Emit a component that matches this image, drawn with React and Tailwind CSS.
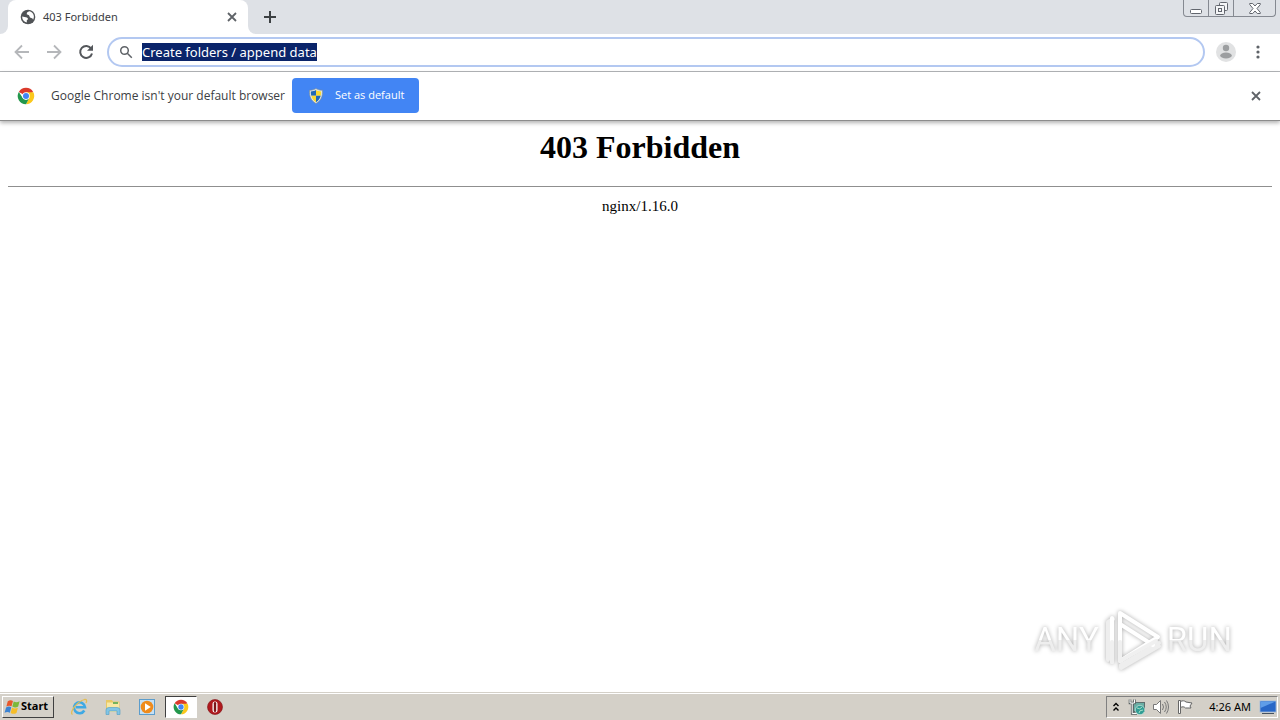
import { useEffect, useRef } from 'react';

const GlobeIcon = () => (
  <svg viewBox="0 0 16 16" className="w-4 h-4 shrink-0" aria-hidden="true">
    <circle cx="8" cy="8" r="7.3" fill="#505356" />
    <path d="M2.2 7.6 7 8.4l1.2 1.5-1.4 1.3v2.3C4 13 2.200 10.800 2.200 8z" fill="#fff" />
    <path d="M9.200 2.300 7 3.600 6.700 5.300 9 6.300l1 2.200 2.500 1 .6 1.300c1.200-2.200 1-4.600-.2-6.300C12 3.300 10.700 2.500 9.200 2.300z" fill="#fff" />
  </svg>
);

const CloseIcon = ({ className }) => (
  <svg viewBox="0 0 10 10" className={className} fill="none" stroke="#5f6368" strokeWidth="1.8" aria-hidden="true">
    <path d="M1 1l8 8M9 1L1 9" />
  </svg>
);

const ChromeLogo = ({ className }) => (
  <svg viewBox="0 0 48 48" className={className} aria-hidden="true">
    <path d="M24 24 4.9 13A22 22 0 0 1 43.1 13z" fill="#db3a2b" />
    <path d="M24 14h19.600A22 22 0 0 1 24 46l8.700-17z" fill="#fbc81c" />
    <path d="M4.900 13 15.300 29 24 34l8.700-5L24 46A22 22 0 0 1 4.900 13z" fill="#23974c" />
    <circle cx="24" cy="24" r="10" fill="#fff" />
    <circle cx="24" cy="24" r="8" fill="#4285f4" />
  </svg>
);

const ShieldIcon = () => (
  <svg viewBox="0 0 16 16" className="w-4 h-4" aria-hidden="true">
    <path d="M8 .5c2 1.400 4 1.700 6.500 1.700.3 6-1.200 10.300-6.500 13.300C2.700 12.500 1.200 8.200 1.500 2.200 4 2.200 6 1.900 8 .5z" fill="#dfe6ea" stroke="#7b8a8c" strokeWidth=".6" />
    <path d="M8 2C6.400 3 4.800 3.400 2.800 3.500c0 1.500.1 2.800.5 4.200H8z" fill="#1f68b8" />
    <path d="M8 2c1.600 1 3.200 1.400 5.200 1.500 0 1.500-.1 2.800-.5 4.200H8z" fill="#f9d932" />
    <path d="M3.300 7.700C4 10.600 5.600 12.700 8 14.200V7.700z" fill="#f9d932" />
    <path d="M12.700 7.700C12 10.600 10.400 12.700 8 14.200V7.700z" fill="#1f68b8" />
  </svg>
);

const TabStrip = () => (
  <header className="h-[34px] bg-[#dee1e6] flex items-start">
    <div className="w-2 h-[34px] bg-white shrink-0">
      <div className="h-full bg-[#dee1e6] rounded-br-lg"></div>
    </div>
    <div className="w-60 h-[34px] bg-white rounded-t-lg flex items-center pl-3 pr-[9px]">
      <GlobeIcon />
      <span className="ml-[7px] flex-1 text-[11px] text-[#3c4043]">403 Forbidden</span>
      <button aria-label="Close tab" className="p-0.5">
        <CloseIcon className="w-2.5 h-2.5" />
      </button>
    </div>
    <div className="w-2 h-[34px] bg-white shrink-0">
      <div className="h-full bg-[#dee1e6] rounded-bl-lg"></div>
    </div>
    <button aria-label="New tab" className="h-[34px] w-7 flex items-center justify-center">
      <svg viewBox="0 0 12 12" className="w-3 h-3" stroke="#3c4043" strokeWidth="2">
        <path d="M6 0v12M0 6h12" />
      </svg>
    </button>
    <div className="ml-auto mr-1 h-[17px] flex border border-t-0 border-[#858991] rounded-b divide-x divide-[#858991]">
      <button aria-label="Minimize" className="w-[25px] flex items-center justify-center">
        <svg viewBox="0 0 12 12" className="w-3 h-3" fill="#fff" stroke="#62666e">
          <rect x=".5" y="7.5" width="11" height="4" rx="1" />
        </svg>
      </button>
      <button aria-label="Restore" className="w-[25px] flex items-center justify-center">
        <svg viewBox="0 0 13 13" className="w-[13px] h-[13px]" fill="#f4f5f7" stroke="#62666e">
          <rect x="4.5" y=".5" width="8" height="8" rx="1" />
          <rect x=".5" y="3.5" width="9" height="9" rx="1" />
          <rect x="3.5" y="6.5" width="3" height="3" />
        </svg>
      </button>
      <button aria-label="Close" className="w-[41px] flex items-center justify-center">
        <svg viewBox="0 0 12 11" className="w-3 h-[11px]" fill="#fff" stroke="#62666e">
          <path d="M.7.5h3L6 3 8.300.5h3v1L8 5.500l3.300 4v1h-3L6 8l-2.300 2.500h-3v-1L4 5.500.7 1.500z" />
        </svg>
      </button>
    </div>
  </header>
);

const Toolbar = () => {
  const inputRef = useRef(null);

  useEffect(() => {
    inputRef.current.focus();
    inputRef.current.select();
  }, []);

  return (
    <div className="h-[38px] border-b border-[#b4b6b9] flex items-center pb-px pl-3.5 pr-3.5">
      <div className="flex items-center gap-4 shrink-0">
        <button aria-label="Back">
          <svg viewBox="0 0 16 16" className="w-4 h-4" fill="none" stroke="#b5b7ba" strokeWidth="1.8">
            <path d="M15 8H2M8 1.500 1.500 8 8 14.500" />
          </svg>
        </button>
        <button aria-label="Forward">
          <svg viewBox="0 0 16 16" className="w-4 h-4" fill="none" stroke="#b5b7ba" strokeWidth="1.8">
            <path d="M1 8h13M8 1.500 14.500 8 8 14.500" />
          </svg>
        </button>
        <button aria-label="Reload">
          <svg viewBox="0 0 16 16" className="w-4 h-4">
            <path d="M13.200 4.600A6 6 0 1 0 14 9.500" fill="none" stroke="#54575b" strokeWidth="2" />
            <path d="M15 .8v6H9z" fill="#54575b" />
          </svg>
        </button>
      </div>
      <div className="ml-[13px] flex-1 h-[30px] border-2 border-[#b3c8f1] rounded-full flex items-center pl-2.5">
        <svg viewBox="0 0 14 14" className="w-3.5 h-3.5 shrink-0" fill="none" stroke="#5f6368" strokeWidth="1.5">
          <circle cx="5.5" cy="5.5" r="3.8" />
          <path d="M8.300 8.300 12.800 12.800" />
        </svg>
        <input
          ref={inputRef}
          type="text"
          aria-label="Address and search bar"
          defaultValue="Create folders / append data"
          className="ml-[9px] flex-1 h-[18px] leading-[18px] text-[13px] bg-transparent outline-none caret-transparent selection:bg-[#0a246a] selection:text-white"
        />
      </div>
      <button aria-label="Profile" className="ml-[11px]">
        <svg viewBox="0 0 20 20" className="w-5 h-5">
          <circle cx="10" cy="10" r="10" fill="#e1e2e3" />
          <circle cx="10" cy="6" r="3.2" fill="#9c9ea0" />
          <ellipse cx="10" cy="13.5" rx="5.8" ry="3" fill="#9c9ea0" />
        </svg>
      </button>
      <button aria-label="Menu" className="ml-3.5">
        <svg viewBox="0 0 16 16" className="w-4 h-4" fill="#5f6368">
          <circle cx="8" cy="3" r="1.6" />
          <circle cx="8" cy="8" r="1.6" />
          <circle cx="8" cy="13" r="1.6" />
        </svg>
      </button>
    </div>
  );
};

const InfoBar = () => (
  <div className="h-[49px] border-b border-[#8c8c8c] shadow-[0_2px_4px_rgba(0,0,0,0.3)] flex items-center pb-px pl-[17px] pr-[19px]">
    <ChromeLogo className="w-[18px] h-[18px]" />
    <p className="ml-4 w-[229px] whitespace-nowrap text-[12px] text-[#3c4043] font-['Open_Sans','Noto_Sans',sans-serif]">
      Google Chrome isn't your default browser
    </p>
    <button className="ml-3 h-[35px] w-[127px] bg-[#4285f4] rounded text-white text-[11px] flex items-center pl-4 gap-[11px] whitespace-nowrap font-['Open_Sans','Noto_Sans',sans-serif]">
      <ShieldIcon />
      Set as default
    </button>
    <button aria-label="Dismiss" className="ml-auto">
      <CloseIcon className="w-2.5 h-2.5" />
    </button>
  </div>
);

const Watermark = () => (
  <div className="absolute right-12 bottom-5 h-16 flex items-center gap-1 text-[33px] leading-10 drop-shadow-[0_0_2px_#aaa] font-['Roboto',sans-serif]">
    <span className="text-transparent bg-clip-text bg-linear-to-b from-white from-50% to-[#eeeeee] to-50%">ANY</span>
    <svg viewBox="0 0 60 64" className="w-[60px] h-16" fill="none" strokeWidth="4" strokeLinejoin="round" strokeLinecap="round">
      <path d="M18 57 56 35M5 52V14l5-3M18 57v3l38-22" stroke="#eeeeee" />
      <path d="M17 48V5l38 24-38 24M17 16l33 21M9 10v44" stroke="#fff" />
      <path d="M17 34v19l36-20M9 34v20" stroke="#f0f0f0" />
    </svg>
    <span className="text-transparent bg-clip-text bg-linear-to-b from-white from-50% to-[#eeeeee] to-50%">RUN</span>
  </div>
);

const StartFlag = () => (
  <svg viewBox="0 0 18 16" className="w-[17px] h-4 shrink-0" aria-hidden="true">
    <path d="M4 2c2-1.500 4-1.300 5.500-.3L8 7.300C6.500 6.300 4.500 6.300 2.500 7.500z" fill="#e8582b" />
    <path d="M10.300 2.200c2 1.200 4 1 6.200-.2L15 7.600c-2 1.200-4 1.200-6.200 0z" fill="#7cb83a" />
    <path d="M2.200 8.500c2-1.200 4-1.200 5.500-.2L6.200 14C4.500 13 2.500 13 .6 14.200z" fill="#3c83d2" />
    <path d="M8.500 8.600c2 1.200 4 1.200 6.200.1L13.200 14.300c-2 1.200-4 1.200-6.200 0z" fill="#f6bd28" />
  </svg>
);

const ExplorerIcon = () => (
  <svg viewBox="0 0 18 18" className="w-[18px] h-[18px]">
    <path d="M14.300 12.500A5.500 5.500 0 1 1 15 9.200H6" fill="none" stroke="#3fa9e4" strokeWidth="2.6" />
    <path d="M2.500 16.500c-3.500-1.500 3.500-12.500 12-15 2.500-.4 2.500 1.500 1.500 3.500" fill="none" stroke="#e3bd55" strokeWidth="1.3" />
  </svg>
);

const FolderIcon = () => (
  <svg viewBox="0 0 18 18" className="w-[18px] h-[18px]">
    <path d="M2 2h6l1 1.500h6.500V14H2z" fill="#e8c865" />
    <path d="M3 4.500h12V14H3z" fill="#f8e8a4" />
    <path d="M9 4h5v2H9z" fill="#75b35d" />
    <path d="M2 16.500v-4.500q0-2.500 3-2.500h8q3 0 3 2.500v4.500h-3V13H5v3.500z" fill="#82c5e5" stroke="#4e9cc4" strokeWidth=".6" />
  </svg>
);

const PlayerIcon = () => (
  <svg viewBox="0 0 18 18" className="w-[18px] h-[18px]">
    <rect x="1.5" y="1.5" width="15" height="15" fill="#c5e0f5" stroke="#5c9dcc" />
    <circle cx="9" cy="9" r="6.3" fill="#ef8b1c" />
    <path d="M7 5.200 12.800 9 7 12.800z" fill="#fff" />
  </svg>
);

const OperaIcon = () => (
  <svg viewBox="0 0 18 18" className="w-[18px] h-[18px]">
    <circle cx="9" cy="9" r="7.5" fill="#b0191e" stroke="#7d1114" strokeWidth=".6" />
    <rect x="6.5" y="3.5" width="5" height="11" rx="2.5" fill="#fff" />
    <rect x="7.8" y="4" width="2.4" height="10" rx="1.2" fill="#7c1518" />
  </svg>
);

const quickLaunch = [
  { label: 'Internet Explorer', icon: <ExplorerIcon /> },
  { label: 'Windows Explorer', icon: <FolderIcon /> },
  { label: 'Media Player', icon: <PlayerIcon /> },
  { label: 'Google Chrome', icon: <ChromeLogo className="w-4 h-4" />, active: true },
  { label: 'Opera', icon: <OperaIcon /> },
];

const Tray = () => (
  <div className="ml-auto h-[22px] flex items-center pl-[5px] border border-t-[#808080] border-l-[#808080] border-b-white border-r-white">
    <button aria-label="Show hidden icons">
      <svg viewBox="0 0 8 10" className="w-2 h-2.5" fill="none" stroke="#000" strokeWidth="1.4">
        <path d="M1.500 4 4 1.500 6.500 4M1.500 8.500 4 6l2.500 2.500" />
      </svg>
    </button>
    <svg viewBox="0 0 18 18" className="w-[18px] h-[18px] ml-2">
      <rect x="5.5" y="4.5" width="11" height="9" fill="#69aea4" stroke="#5c6d6d" />
      <path d="M2 1.500V5h4.500V1.500M4.200 5v10.500H9" fill="none" stroke="#5a6262" strokeWidth="2.6" />
      <path d="M2 1.500V5h4.500V1.500M4.200 5v10.500H9" fill="none" stroke="#fff" />
      <circle cx="12" cy="12" r="4.7" fill="#319d94" stroke="#cfe6e0" strokeWidth=".7" />
      <path d="M9 10q3 2 5-1M11 15q0-3 4-3" fill="none" stroke="#a5e0c8" />
    </svg>
    <svg viewBox="0 0 18 18" className="w-[18px] h-[18px] ml-1.5" fill="none" stroke="#777">
      <path d="M1.500 6.500h3l4-4v13l-4-4h-3z" fill="#fff" />
      <path d="M10.500 6q2 3 0 6M12.500 4q3.500 5 0 10M14.500 2.500q4 6.500 0 13" />
    </svg>
    <svg viewBox="0 0 18 18" className="w-[18px] h-[18px] ml-1.5" fill="#fff" stroke="#666">
      <path d="M2.500 2.500h2v13h-2z" />
      <path d="M4.500 3.500c2-1 4-1 5.500.5l6 1-2 3 1 2H9.500c-1.500-1.500-3-1.500-5-.5z" />
    </svg>
    <time className="ml-[15px] text-[11px] leading-4 text-black whitespace-nowrap">4:26 AM</time>
    <svg viewBox="0 0 18 16" className="w-[18px] h-4 ml-2">
      <rect x="1" y="2" width="16" height="11" fill="#2867c7" stroke="#9fb9dc" strokeWidth=".8" />
      <path d="M1.500 2.500h15L1.500 9z" fill="#5f9de8" />
      <path d="M3 14.500h12" stroke="#46525f" />
    </svg>
  </div>
);

const Taskbar = () => (
  <footer className="h-7 shrink-0 bg-[#d4d0c8] border-t border-[#d4d0c8] shadow-[inset_0_1px_0_#fff] flex items-center pl-0.5 pr-0.5">
    <button className="h-[22px] w-[52px] flex items-center pl-px text-[11px] font-bold text-black border border-t-white border-l-white border-b-[#404040] border-r-[#404040] font-['Noto_Sans',sans-serif]">
      <StartFlag />
      Start
    </button>
    <nav className="ml-[9px] flex items-center gap-0.5">
      {quickLaunch.map((item) => (
        <button
          key={item.label}
          aria-label={item.label}
          className={`w-8 h-[22px] flex items-center justify-center ${
            item.active ? 'bg-white border border-t-[#404040] border-l-[#404040] border-b-white border-r-white' : ''
          }`}
        >
          {item.icon}
        </button>
      ))}
    </nav>
    <Tray />
  </footer>
);

export default function App() {
  return (
    <div className="min-h-screen bg-white flex flex-col font-['Noto_Sans','DejaVu_Sans',sans-serif]">
      <TabStrip />
      <Toolbar />
      <InfoBar />
      <main className="relative flex-1 px-2 pt-2 text-center text-black font-['Liberation_Serif',serif]">
        <h1 className="text-[32px] leading-[37px] font-bold">403 Forbidden</h1>
        <hr className="mt-5 border-t border-[#8f8f8f]" />
        <p className="mt-2.5 text-[15px] leading-[18px]">nginx/1.16.0</p>
        <Watermark />
      </main>
      <Taskbar />
    </div>
  );
}
